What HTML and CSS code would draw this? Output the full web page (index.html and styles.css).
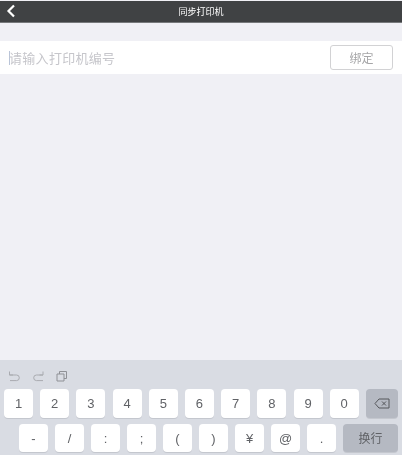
FILE: index.html
```html
<!DOCTYPE html>
<html lang="zh">
<head>
<meta charset="utf-8">
<title>同步打印机</title>
<link rel="stylesheet" href="styles.css">
</head>
<body>
<div class="page">
  <header class="nav">
    <svg class="back" width="10" height="14" viewBox="0 0 10 14"><path d="M8 1.500 2.500 7 8 12.500" fill="none" stroke="#fff" stroke-width="2.2"/></svg>
    <span class="title">同步打印机</span>
  </header>
  <main class="content">
    <div class="row">
      <span class="field"><i class="caret"></i><span class="placeholder">请输入打印机编号</span></span>
      <button class="bind">绑定</button>
    </div>
  </main>
  <section class="keyboard">
    <div class="tools">
      <svg width="14" height="12" viewBox="0 0 14 12"><path d="M1.500 1.500V5H5M1.500 5H8.500a2.800 2.800 0 0 1 0 5.600H2" fill="none" stroke="#a9abb0" stroke-width="1"/></svg>
      <svg width="14" height="12" viewBox="0 0 14 12"><path d="M11 1.500V5H7.500M11 5H4.500a2.800 2.800 0 0 0 0 5.600H11" fill="none" stroke="#a9abb0" stroke-width="1"/></svg>
      <svg width="12" height="12" viewBox="0 0 12 12"><path d="M1 4h7v7H1zM3.500 4V1.500h7V8.500H8" fill="none" stroke="#8f9196" stroke-width="1"/></svg>
    </div>
    <div class="keys one">
      <span class="key">1</span><span class="key">2</span><span class="key">3</span><span class="key">4</span><span class="key">5</span><span class="key">6</span><span class="key">7</span><span class="key">8</span><span class="key">9</span><span class="key">0</span>
      <span class="key dark del"><svg width="16" height="11" viewBox="0 0 16 11"><path d="M5 1H15V10H5L1 5.500ZM8 3.500l4 4M12 3.500l-4 4" fill="none" stroke="#55575b" stroke-width="1"/></svg></span>
    </div>
    <div class="keys two">
      <span class="key">-</span><span class="key">/</span><span class="key">:</span><span class="key">;</span><span class="key">(</span><span class="key">)</span><span class="key">¥</span><span class="key">@</span><span class="key">.</span>
      <span class="key dark ret">换行</span>
    </div>
  </section>
</div>
</body>
</html>
```
FILE: styles.css
```css
* { box-sizing: border-box; }
html, body { margin: 0; padding: 0; }
body { width: 402px; height: 455px; overflow: hidden; background: #f0f0f5; font-family: "Liberation Sans", "Noto Sans CJK SC", sans-serif; }
.page { height: 455px; display: flex; flex-direction: column; padding-top: 1px; filter: blur(.4px); }
.nav { height: 22px; background: #404244; border-bottom: 1px solid #77797b; display: flex; align-items: center; justify-content: center; position: relative; }
.back { position: absolute; left: 6px; top: 3px; }
.title { color: #fff; font-size: 9px; }
.content { flex: 1; padding-top: 18px; }
.row { height: 33px; background: #fff; display: flex; align-items: center; justify-content: space-between; padding: 0 9px; }
.field { display: flex; align-items: center; }
.caret { width: 1px; height: 14px; background: #b9c4d8; margin-right: -1px; }
.placeholder { font-size: 13px; color: #c6c6cb; letter-spacing: .3px; }
.bind { width: 63px; height: 25px; padding: 0; background: #fff; border: 1px solid #d2d2d4; border-radius: 3px; color: #a6a6a8; font: 12px "Liberation Sans", "Noto Sans CJK SC", sans-serif; }
.keyboard { height: 95px; background: #d9dce3; display: flex; flex-direction: column; }
.tools { height: 29px; display: flex; align-items: center; gap: 10px; padding: 3px 0 0 8px; }
.keys { display: flex; }
.one { padding-left: 4px; gap: 7.2px; height: 29px; }
.two { padding-left: 19px; gap: 7px; height: 28px; margin-top: 6px; }
.key { width: 29px; background: #fff; border-radius: 4px; color: #606266; font-size: 13px; display: flex; align-items: center; justify-content: center; box-shadow: 0 1px 0 #c4c7ce; }
.dark { background: #b5b9c2; }
.del { width: 32px; }
.ret { width: 55px; font-size: 12px; padding-bottom: 2px; }
```
